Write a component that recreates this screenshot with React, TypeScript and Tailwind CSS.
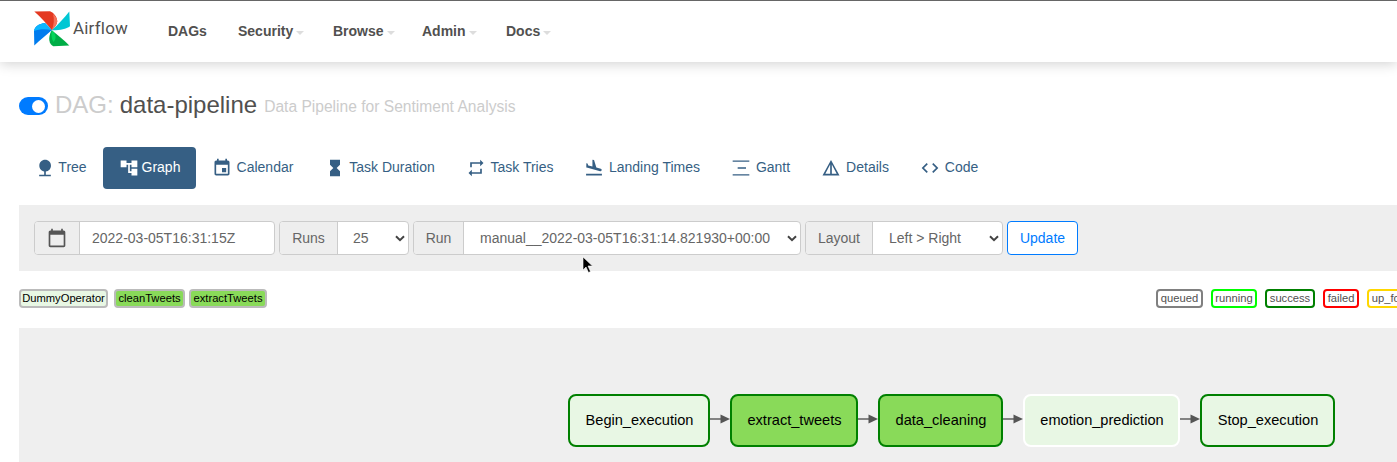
import React from "react";

const M = ({ d, c = "#365f84", s = 20 }: { d: string; c?: string; s?: number }) => (
  <svg width={s} height={s} viewBox="0 0 24 24" fill={c} className="shrink-0"><path d={d} /></svg>
);

const tabs = [
  { t: "Tree", d: "M13 16.12c3.47-.41 6.17-3.36 6.17-6.95 0-3.87-3.13-7-7-7s-7 3.13-7 7c0 3.47 2.52 6.34 5.83 6.89V20H5v2h14v-2h-6v-3.88z", w: "w-[84px]", g: "gap-[3px]" },
  { t: "Graph", d: "M22 11V3h-7v3H9V3H2v8h7V8h2v10h4v3h7v-8h-7v3h-2V8h2v3z", w: "w-[93px]", g: "gap-[3px]", active: true },
  { t: "Calendar", d: "M17 12h-5v5h5v-5zM16 1v2H8V1H6v2H5c-1.11 0-1.99.9-1.99 2L3 19c0 1.1.89 2 2 2h14c1.1 0 2-.9 2-2V5c0-1.1-.9-2-2-2h-1V1h-2zm3 18H5V8h14v11z", w: "w-[113px]", g: "gap-[5px]" },
  { t: "Task Duration", d: "M6 2v6h.01L6 8.01 10 12l-4 4 .01.01H6V22h12v-5.99h-.01L18 16l-4-4 4-3.99-.01-.01H18V2H6z", w: "w-[142px]", g: "gap-[4px]" },
  { t: "Task Tries", d: "M7 7h10v3l4-4-4-4v3H5v6h2V7zm10 10H7v-3l-4 4 4 4v-3h12v-6h-2v4z", w: "w-[118px]", g: "gap-[4px]" },
  { t: "Landing Times", d: "M2.5 19h19v2h-19zm7.18-5.73l4.35 1.16 5.31 1.42c.8.21 1.62-.26 1.84-1.06.21-.8-.26-1.62-1.06-1.84l-5.31-1.42-2.76-9.02L10.12 2v8.28L5.15 8.95l-.93-2.32-1.45-.39v5.17l1.6.43 5.31 1.43z", w: "w-[146px]", g: "gap-[5px]" },
  { t: "Gantt", d: "M2 3h20v1.6H2zM8 11.2h10v1.6H8zM2 19.4h20V21H2z", w: "w-[91px]", g: "gap-[5px]" },
  { t: "Details", d: "M12 2.5 1.8 21h20.4L12 2.5zm-1 5.3V19H5.2L11 7.8zm2 0L18.8 19H13V7.8z", w: "w-[98px]", g: "gap-[5px]" },
  { t: "Code", d: "M9.4 16.6L4.8 12l4.6-4.6L8 6l-6 6 6 6 1.4-1.4zm5.2 0l4.6-4.6-4.6-4.6L16 6l6 6-6 6-1.4-1.4z", w: "w-[90px]", g: "gap-[5px]" },
];

const Addon = ({ children, w }: { children: React.ReactNode; w: string }) => (
  <div className={`${w} h-full flex items-center justify-center bg-[#eeeeee] border-r border-[#cccccc] text-[#666666]`}>{children}</div>
);

const Chevron = () => (
  <svg width="10" height="7" viewBox="0 0 10 7" className="shrink-0"><path d="M1 1.2 5 5.2 9 1.2" fill="none" stroke="#444444" strokeWidth="2" /></svg>
);

const Group = ({ w, children }: { w: string; children: React.ReactNode }) => (
  <div className={`${w} h-[34px] flex items-center bg-white border border-[#cccccc] rounded-[4px] overflow-hidden text-[14px] shrink-0`}>{children}</div>
);

const states = [
  ["queued", "border-[#808080]", "w-[47px]"],
  ["running", "border-[#00ff00]", "w-[46px]"],
  ["success", "border-[#008000]", "w-[50px]"],
  ["failed", "border-[#ff0000]", "w-[36px]"],
  ["up_for_retry", "border-[#ffd700]", "w-[70px]"],
];

const Node = ({ label, w, fill, border }: { label: string; w: string; fill: string; border: string }) => (
  <div className={`${w} ${fill} ${border} h-[53px] shrink-0 border-[2px] rounded-[8px] flex items-center justify-center pt-[1px] pl-[1px] text-[14.6px] text-black`}>{label}</div>
);

const Arrow = () => (
  <svg width="20" height="12" viewBox="0 0 20 12" className="shrink-0 -mt-[3px]">
    <path d="M0 6h13" stroke="#555555" strokeWidth="1.4" />
    <path d="M10.5 1.5 20 6l-9.500 4.500z" fill="#555555" />
  </svg>
);

export default function App() {
  return (
    <div className="relative w-[1397px] h-[462px] overflow-hidden bg-white font-['Liberation_Sans',Arial,sans-serif]">
      <header className="relative z-10 h-[62px] bg-white border-t border-[#666666] shadow-[0_2px_12px_rgba(0,0,0,0.18)] flex items-center">
        <div className="ml-[32px] flex items-center w-[136px] shrink-0">
          <svg width="40" height="38" viewBox="0 0 40 38" className="shrink-0 -mt-[3px]">
            <path d="M2.300 .5 18 .2C22 1.500 25 6 25.300 10.200 25 14 22 17 19.700 19.200 15 13 9 6.500 2.300 .5z" fill="#e43921" />
            <path d="M21 3C24 5 25 8 25.300 10.200 25 14 22 17 19.700 19.200 22 14 22.500 8 21 3z" fill="#f4725b" />
            <path d="M37.300 .5 38 15.200C34 18 27 19.500 19.700 19.200 26 14 32 7 37.300 .5z" fill="#00c7d4" />
            <path d="M37.300 34.500 21.300 35.200C17 33 15.500 27 19.700 19.200 26 24 32 29 37.300 34.500z" fill="#00ad46" />
            <path d="M19.700 19.200C19 24 19.500 28 21.500 31 25 27 24 22 19.700 19.200z" fill="#04d659" />
            <path d="M2.300 34.500 2 20C3 15 7 12.800 13 12 15 14 18 17 19.700 19.200 14 24 8 29 2.300 34.500z" fill="#017cee" />
            <path d="M2 20C3 15 7 12.800 13 12 15 14 18 17 19.700 19.200 14 17.500 7 18 2 20z" fill="#0cb6ff" />
          </svg>
          <span className="ml-[1px] -mt-[5px] text-[17px] text-[#51504f] font-['Roboto',sans-serif] tracking-[0.2px]">Airflow</span>
        </div>
        <nav className="flex items-center text-[14px] font-bold text-[#51504f]">
          <span className="w-[70px]">DAGs</span>
          {[["Security", "w-[95px]"], ["Browse", "w-[89px]"], ["Admin", "w-[84px]"], ["Docs", "w-[60px]"]].map(([t, w]) => (
            <span key={t} className={`${w} flex items-center`}>
              {t}
              <span className="ml-[3px] mt-[2px] w-0 h-0 border-x-[4px] border-x-transparent border-t-[4px] border-t-[#dddddd]" />
            </span>
          ))}
        </nav>
      </header>

      <main className="pl-[19px]">
        <div className="flex items-center h-[34px] mt-[26px]">
          <div className="w-[29px] h-[18px] rounded-full bg-[#007bff] flex items-center justify-end pr-[3px] shrink-0 mt-[2px]">
            <div className="w-[13px] h-[13px] rounded-full bg-white" />
          </div>
          <span className="ml-[7px] text-[24px] text-[#cccccc]">DAG:</span>
          <span className="ml-[6px] text-[24px] text-[#51504f]">data-pipeline</span>
          <span className="ml-[7px] mt-[3px] text-[15.6px] text-[#cccccc]">Data Pipeline for Sentiment Analysis</span>
        </div>

        <div className="flex items-center h-[42px] mt-[25px]">
          {tabs.map((x) => (
            <div key={x.t} className={`${x.w} ${x.g} h-full shrink-0 flex items-center justify-center rounded-[4px] text-[14px] ${x.active ? "bg-[#365f84] text-white" : "text-[#365f84]"}`}>
              <M d={x.d} c={x.active ? "#ffffff" : "#365f84"} s={20} />
              <span className="mb-[2px]">{x.t}</span>
            </div>
          ))}
        </div>

        <div className="mt-[16px] h-[66px] bg-[#eeeeee] flex items-center gap-[4px] pl-[15px]">
          <Group w="w-[241px]">
            <Addon w="w-[45px]"><M d="M20 3h-1V1h-2v2H7V1H5v2H4c-1.100 0-2 .9-2 2v16c0 1.100.9 2 2 2h16c1.100 0 2-.9 2-2V5c0-1.100-.9-2-2-2zm0 18H4V8h16v13z" c="#555555" s={20} /></Addon>
            <span className="pl-[12px] text-[#666666]">2022-03-05T16:31:15Z</span>
          </Group>
          <Group w="w-[130px]">
            <Addon w="w-[58px]">Runs</Addon>
            <span className="pl-[15px] text-[#666666] flex-1">25</span>
            <span className="pr-[3px] flex"><Chevron /></span>
          </Group>
          <Group w="w-[388px]">
            <Addon w="w-[50px]">Run</Addon>
            <span className="pl-[16px] text-[#666666] flex-1 whitespace-nowrap">manual__2022-03-05T16:31:14.821930+00:00</span>
            <span className="pr-[3px] flex"><Chevron /></span>
          </Group>
          <Group w="w-[198px]">
            <Addon w="w-[67px]">Layout</Addon>
            <span className="pl-[16px] text-[#666666] flex-1">{"Left > Right"}</span>
            <span className="pr-[3px] flex"><Chevron /></span>
          </Group>
          <div className="w-[71px] h-[34px] border border-[#007bff] rounded-[4px] bg-white text-[#007bff] text-[14px] flex items-center justify-center shrink-0">Update</div>
        </div>

        <div className="mt-[17px] h-[20px] flex items-center text-[11.2px] text-black">
          <span className="h-[19px] w-[89px] shrink-0 flex items-center justify-center bg-[#e8f7e4] border-[2px] border-[#bbbbbb] rounded-[4px]">DummyOperator</span>
          <span className="ml-[6px] h-[19px] w-[71px] shrink-0 flex items-center justify-center bg-[#89da59] border-[2px] border-[#bbbbbb] rounded-[4px]">cleanTweets</span>
          <span className="ml-[4px] h-[19px] w-[78px] shrink-0 flex items-center justify-center bg-[#89da59] border-[2px] border-[#bbbbbb] rounded-[4px]">extractTweets</span>
          <div className="ml-[889px] flex items-center gap-[8px] shrink-0 text-[#51504f]">
            {states.map(([t, b, w]) => (
              <span key={t} className={`${w} ${b} h-[19px] shrink-0 border-[2px] rounded-[4px] bg-white flex items-center justify-center whitespace-nowrap`}>{t}</span>
            ))}
          </div>
        </div>

        <div className="mt-[20px] h-[134px] bg-[#efefef] flex items-start pl-[549px] pt-[66px]">
          <div className="flex items-center">
            <Node label="Begin_execution" w="w-[142px]" fill="bg-[#e8f7e4]" border="border-[#008000]" />
            <Arrow />
            <Node label="extract_tweets" w="w-[128px]" fill="bg-[#89da59]" border="border-[#008000]" />
            <Arrow />
            <Node label="data_cleaning" w="w-[125px]" fill="bg-[#89da59]" border="border-[#008000]" />
            <Arrow />
            <Node label="emotion_prediction" w="w-[157px]" fill="bg-[#e8f7e4]" border="border-white" />
            <Arrow />
            <Node label="Stop_execution" w="w-[135px]" fill="bg-[#e8f7e4]" border="border-[#008000]" />
          </div>
        </div>
      </main>

      <svg width="12" height="18" viewBox="0 0 12 18" className="absolute left-[582px] top-[256px]">
        <path d="M1 1v13l3-3 2.500 5.500 2-1L6 10h4.500z" fill="#000000" stroke="#ffffff" strokeWidth="0.6" />
      </svg>
    </div>
  );
}
